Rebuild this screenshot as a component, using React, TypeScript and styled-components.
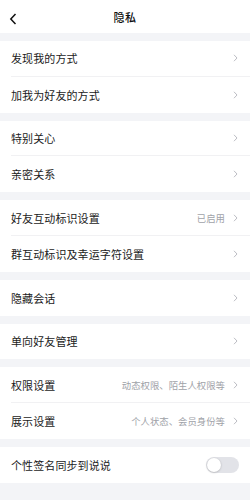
import React from "react";
import styled, { createGlobalStyle } from "styled-components";

const GlobalStyle = createGlobalStyle`
  html, body {
    margin: 0;
    padding: 0;
    background: #f3f4f7;
  }
  body {
    font-family: "Noto Sans CJK SC", "Noto Sans", sans-serif;
  }
`;

interface RowItem {
  label: string;
  value?: string;
  toggle?: boolean;
}

const sections: RowItem[][] = [
  [{ label: "发现我的方式" }, { label: "加我为好友的方式" }],
  [{ label: "特别关心" }, { label: "亲密关系" }],
  [{ label: "好友互动标识设置", value: "已启用" }, { label: "群互动标识及幸运字符设置" }],
  [{ label: "隐藏会话" }],
  [{ label: "单向好友管理" }],
  [
    { label: "权限设置", value: "动态权限、陌生人权限等" },
    { label: "展示设置", value: "个人状态、会员身份等" },
  ],
  [{ label: "个性签名同步到说说", toggle: true }],
];

const Page = styled.div`
  width: 250px;
  min-height: 500px;
  background: #f3f4f7;
  display: flex;
  flex-direction: column;
  gap: 8px;
`;

const Header = styled.div`
  height: 33px;
  background: #ffffff;
  position: relative;
  display: flex;
  align-items: center;
  justify-content: center;
`;

const Title = styled.div`
  font-size: 11px;
  font-weight: 500;
  color: #111;
  letter-spacing: 0.5px;
`;

const Back = styled.svg`
  position: absolute;
  left: 9px;
  top: 13px;
`;

const Section = styled.div`
  background: #ffffff;
`;

const Row = styled.div<{ $divider: boolean }>`
  height: 35.8px;
  display: flex;
  align-items: center;
  margin-left: 11px;
  padding-right: 12px;
  box-sizing: border-box;
  border-bottom: ${(p) => (p.$divider ? "1px solid #f1f1f3" : "none")};
`;

const Label = styled.div`
  flex: 1;
  font-size: 11px;
  color: #1b1b1b;
  letter-spacing: 0.1px;
`;

const Value = styled.div`
  font-size: 9.4px;
  color: #a0a2a8;
  margin-right: 8px;
`;

const Toggle = styled.div`
  width: 33px;
  height: 16px;
  border-radius: 8px;
  background: #e2e3e8;
  position: relative;
  margin-right: -1px;
`;

const Knob = styled.div`
  position: absolute;
  left: 1px;
  top: 1px;
  width: 14px;
  height: 14px;
  border-radius: 50%;
  background: #fff;
  box-shadow: 0 0.5px 2px rgba(0, 0, 0, 0.25);
`;

const Chevron = () => (
  <svg width="5" height="8" viewBox="0 0 5 8">
    <path d="M1 0.8 L4 4 L1 7.2" fill="none" stroke="#b4b6bc" strokeWidth="0.9" />
  </svg>
);

export default function App() {
  return (
    <>
      <GlobalStyle />
      <Page>
        <Header>
          <Back width="8" height="12" viewBox="0 0 8 12">
            <path d="M6.5 1 L1.8 6 L6.5 11" fill="none" stroke="#111" strokeWidth="1.5" />
          </Back>
          <Title>隐私</Title>
        </Header>
        {sections.map((rows, si) => (
          <Section key={si}>
            {rows.map((r, ri) => (
              <Row key={r.label} $divider={ri < rows.length - 1}>
                <Label>{r.label}</Label>
                {r.value && <Value>{r.value}</Value>}
                {r.toggle ? (
                  <Toggle>
                    <Knob />
                  </Toggle>
                ) : (
                  <Chevron />
                )}
              </Row>
            ))}
          </Section>
        ))}
      </Page>
    </>
  );
}
